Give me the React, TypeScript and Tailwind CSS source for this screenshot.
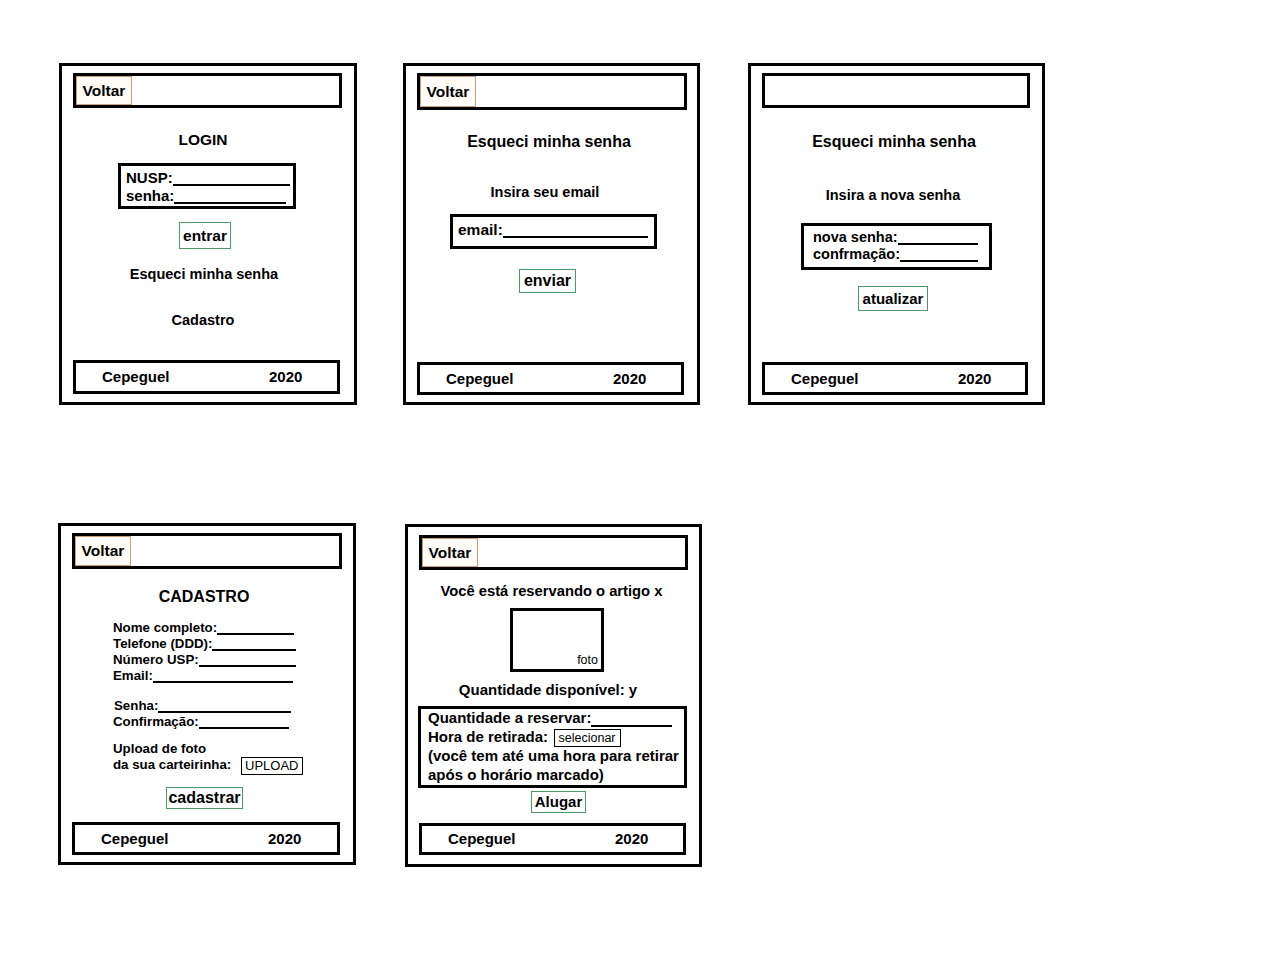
import React from "react";

function Field({ w, label, extra = "" }: { w: string; label: string; extra?: string }) {
  return (
    <div className={`flex whitespace-nowrap ${w} ${extra}`}>
      <span>{label}</span>
      <span className="mb-[1px] min-w-0 flex-1 self-stretch border-b-2 border-black" />
    </div>
  );
}

function Header({ cls, voltar = true }: { cls: string; voltar?: boolean }) {
  return (
    <div className={`flex border-[3px] border-black ${cls}`}>
      {voltar && (
        <div className="flex w-[56px] items-center justify-center border border-[#c8a07a] bg-[#fffcf7] text-[15.5px] leading-[18px]">
          Voltar
        </div>
      )}
    </div>
  );
}

function Footer({ cls }: { cls: string }) {
  return (
    <div className={`flex items-center border-[3px] border-black text-[15px] leading-[18px] ${cls}`}>
      <span className="ml-[26px] w-[167px]">Cepeguel</span>
      <span>2020</span>
    </div>
  );
}

function Btn({ cls, children }: { cls: string; children: React.ReactNode }) {
  return (
    <div className={`flex items-center justify-center border border-[#4a9a68] leading-[18px] ${cls}`}>
      {children}
    </div>
  );
}

export default function App() {
  return (
    <div className="flex h-[962px] w-[1262px] flex-col bg-white font-['Liberation_Sans',Arial,sans-serif] font-bold text-black">
      {/* Row 1 */}
      <div className="flex items-start pl-[59px] pt-[63px]">
        {/* Card 1: Login */}
        <div className="flex h-[342px] w-[298px] shrink-0 flex-col border-[3px] border-black">
          <Header cls="ml-[11px] mt-[7px] h-[35px] w-[269px]" />
          <div className="mt-[23px] pr-[10px] text-center text-[15.5px] leading-[18px]">LOGIN</div>
          <div className="ml-[56px] mt-[14px] h-[46px] w-[178px] border-[3px] border-black pl-[5px] pt-[3px] text-[15px] leading-[18px]">
            <Field w="w-[164px]" label="NUSP:" />
            <Field w="w-[160px]" label="senha:" />
          </div>
          <Btn cls="ml-[117px] mt-[13px] h-[27px] w-[52px] text-[15.5px]">entrar</Btn>
          <div className="mt-[16.5px] pr-[8px] text-center text-[14.5px] leading-[17px]">Esqueci minha senha</div>
          <div className="mt-[29px] pr-[10px] text-center text-[14.5px] leading-[17px]">Cadastro</div>
          <Footer cls="ml-[11px] mt-[31.5px] h-[34px] w-[267px]" />
        </div>

        {/* Card 2: Esqueci minha senha */}
        <div className="ml-[46px] flex h-[342px] w-[297px] shrink-0 flex-col border-[3px] border-black">
          <Header cls="ml-[11px] mt-[7px] h-[37px] w-[270px]" />
          <div className="mt-[23px] pr-[5px] text-center text-[16px] leading-[18px]">Esqueci minha senha</div>
          <div className="mt-[33px] pr-[13px] text-center text-[14.5px] leading-[17px]">Insira seu email</div>
          <div className="ml-[44px] mt-[13px] h-[35px] w-[207px] border-[3px] border-black pl-[5px] pt-[3.5px] text-[15.5px] leading-[18px]">
            <Field w="w-[190px]" label="email:" />
          </div>
          <Btn cls="ml-[113px] mt-[20px] h-[24px] w-[57px] text-[16px]">enviar</Btn>
          <Footer cls="ml-[11px] mt-[69px] h-[33px] w-[267px]" />
        </div>

        {/* Card 3: Nova senha */}
        <div className="ml-[48px] flex h-[342px] w-[297px] shrink-0 flex-col border-[3px] border-black">
          <Header cls="ml-[11px] mt-[7px] h-[35px] w-[268px]" voltar={false} />
          <div className="mt-[25px] pr-[5px] text-center text-[16px] leading-[18px]">Esqueci minha senha</div>
          <div className="mt-[35.5px] pr-[7px] text-center text-[14.5px] leading-[17px]">Insira a nova senha</div>
          <div className="ml-[50px] mt-[19.5px] h-[47px] w-[191px] border-[3px] border-black pl-[9px] pt-[2.5px] text-[14.5px] leading-[17px]">
            <Field w="w-[165px]" label="nova senha:" />
            <Field w="w-[165px]" label="confrmação:" />
          </div>
          <Btn cls="ml-[107px] mt-[16px] h-[25px] w-[70px] text-[15px]">atualizar</Btn>
          <Footer cls="ml-[11px] mt-[51px] h-[33px] w-[266px]" />
        </div>
      </div>

      {/* Row 2 */}
      <div className="mt-[118px] flex items-start pl-[58px]">
        {/* Card 4: Cadastro */}
        <div className="flex h-[342px] w-[298px] shrink-0 flex-col border-[3px] border-black">
          <Header cls="ml-[11px] mt-[7px] h-[36px] w-[270px]" />
          <div className="mt-[19px] pr-[6px] text-center text-[16px] leading-[18px]">CADASTRO</div>
          <div className="ml-[52px] mt-[14.4px] flex flex-col text-[13.3px] leading-[16px]">
            <Field w="w-[181px]" label="Nome completo:" />
            <Field w="w-[183px]" label="Telefone (DDD):" />
            <Field w="w-[183px]" label="Número USP:" />
            <Field w="w-[180px]" label="Email:" />
            <Field w="w-[177px]" label="Senha:" extra="ml-[1px] mt-[13.7px]" />
            <Field w="w-[176px]" label="Confirmação:" />
            <div className="mt-[11.3px]">Upload de foto</div>
            <div className="flex items-start whitespace-nowrap">
              <span>da sua carteirinha:</span>
              <span className="ml-[9.5px] mt-[-0.5px] flex h-[18px] w-[62px] items-center justify-center border border-black text-[13px] font-normal leading-[16px]">
                UPLOAD
              </span>
            </div>
          </div>
          <Btn cls="ml-[105px] mt-[12.5px] h-[22px] w-[77px] text-[16px]">cadastrar</Btn>
          <Footer cls="ml-[11px] mt-[13px] h-[33px] w-[268px]" />
        </div>

        {/* Card 5: Reserva */}
        <div className="ml-[49px] mt-[1px] flex h-[343px] w-[297px] shrink-0 flex-col border-[3px] border-black">
          <Header cls="ml-[11px] mt-[8px] h-[35px] w-[269px]" />
          <div className="mt-[13.4px] pr-[4px] text-center text-[14.75px] leading-[17px]">Você está reservando o artigo x</div>
          <div className="ml-[102px] mt-[7.6px] flex h-[64px] w-[94px] items-end justify-end border-[3px] border-black pb-[2px] pr-[3px] text-[12.5px] font-normal leading-[14px]">
            foto
          </div>
          <div className="mt-[8.6px] pr-[11px] text-center text-[15px] leading-[17px]">Quantidade disponível: y</div>
          <div className="ml-[10px] mt-[8.4px] h-[82px] w-[269px] border-[3px] border-black pl-[7px] pt-[0.5px] text-[15px] leading-[18.7px]">
            <Field w="w-[244px]" label="Quantidade a reservar:" />
            <div className="flex items-start whitespace-nowrap">
              <span>Hora de retirada:</span>
              <span className="ml-[5.5px] mt-[0.5px] flex h-[18px] w-[67px] items-center justify-center border border-black text-[12.5px] font-normal leading-[16px]">
                selecionar
              </span>
            </div>
            <div className="whitespace-nowrap">(você tem até uma hora para retirar</div>
            <div className="whitespace-nowrap">após o horário marcado)</div>
          </div>
          <Btn cls="ml-[123px] mt-[3px] h-[22px] w-[55px] text-[15px]">Alugar</Btn>
          <Footer cls="ml-[11px] mt-[10px] h-[32px] w-[267px]" />
        </div>
      </div>
    </div>
  );
}
